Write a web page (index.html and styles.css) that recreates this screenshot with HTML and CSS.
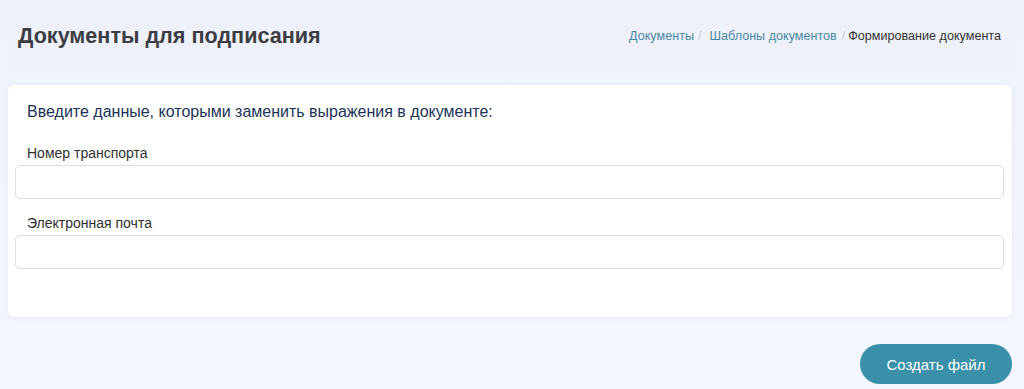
FILE: index.html
```html
<!DOCTYPE html>
<html lang="ru">
<head>
<meta charset="utf-8">
<link rel="stylesheet" href="styles.css">
</head>
<body>
<div class="page">
  <header class="page-header">
    <h1 class="title">Документы для подписания</h1>
    <nav class="breadcrumb">
      <a class="crumb" href="#">Документы</a><span class="sep sep-wide">/</span>
      <a class="crumb" href="#">Шаблоны документов</a><span class="sep">/</span>
      <span class="crumb current">Формирование документа</span>
    </nav>
  </header>
  <section class="card">
    <p class="intro">Введите данные, которыми заменить выражения в документе:</p>
    <div class="field">
      <label class="label">Номер транспорта</label>
      <input class="input" type="text">
    </div>
    <div class="field">
      <label class="label">Электронная почта</label>
      <input class="input" type="text">
    </div>
  </section>
  <div class="actions">
    <button class="btn">Создать файл</button>
  </div>
</div>
</body>
</html>
```
FILE: styles.css
```css
html, body {
  margin: 0;
  padding: 0;
}
body {
  background: linear-gradient(180deg, #eef2fa 0%, #f4f7fe 100%);
  font-family: "Liberation Sans", Arial, sans-serif;
  height: 389px;
  overflow: hidden;
}
.page {
  padding: 0 12px 0 8px;
}
.page-header {
  height: 70px;
  background: #eef1f9;
  display: flex;
  align-items: center;
  justify-content: space-between;
  padding: 0 11px 0 10px;
  box-sizing: border-box;
}
.title {
  margin: 0;
  font-size: 21.6px;
  font-weight: bold;
  color: #3b3d42;
  line-height: 26px;
  padding-top: 2px;
}
.breadcrumb {
  font-size: 12.6px;
  display: flex;
  align-items: center;
  padding-top: 1px;
}
.crumb {
  color: #4a89a6;
  text-decoration: none;
}
.crumb.current {
  color: #333333;
}
.sep {
  color: #c8cdd3;
  margin: 0 3px 0 5px;
}
.sep-wide {
  margin: 0 8px 0 4px;
}
.card {
  margin-top: 15px;
  background: #ffffff;
  border-radius: 6px;
  box-shadow: 0 1px 4px rgba(180, 190, 215, 0.25);
  padding: 17px 8px 48px 7px;
}
.intro {
  margin: 0 0 21px 12px;
  font-size: 16px;
  line-height: 20px;
  color: #1c3458;
}
.field {
  display: flex;
  flex-direction: column;
}
.field + .field {
  margin-top: 14px;
}
.label {
  font-size: 14px;
  line-height: 20px;
  color: #2f2f2f;
  margin: 0 0 2px 12px;
}
.input {
  height: 34px;
  box-sizing: border-box;
  border: 1px solid #dcdfe3;
  border-radius: 5px;
  background: #fff;
  margin: 0;
  font-family: inherit;
}
.actions {
  display: flex;
  justify-content: flex-end;
  margin-top: 27px;
}
.btn {
  width: 152px;
  height: 40px;
  border: none;
  border-radius: 20px;
  background: #3a8fa9;
  color: #ffffff;
  font-family: "Liberation Sans", Arial, sans-serif;
  font-size: 15px;
  cursor: pointer;
}
```
